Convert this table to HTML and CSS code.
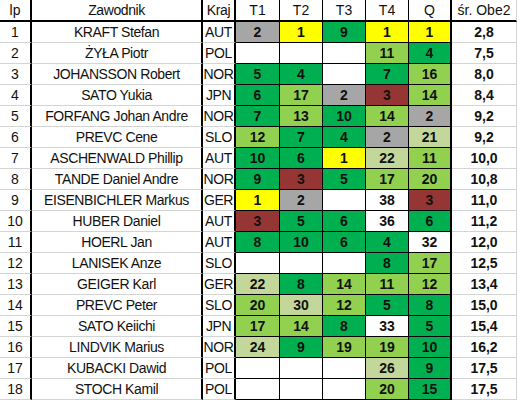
FILE: index.html
```html
<!doctype html>
<html lang="pl">
  <head>
    <meta charset="UTF-8" />
    <title>Wyniki - średnia</title>
    <link rel="stylesheet" href="styles.css">
  </head>
  <body>
    <div class="sheet">
      <div class="row head">
        <div class="c lp">lp</div>
        <div class="c name">Zawodnik</div>
        <div class="c kraj">Kraj</div>
        <div class="c t">T1</div>
        <div class="c t">T2</div>
        <div class="c t">T3</div>
        <div class="c t">T4</div>
        <div class="c t q">Q</div>
        <div class="c avg">śr. Obe2</div>
      </div>

      <div class="row">
        <div class="c lp">1</div><div class="c name">KRAFT Stefan</div><div class="c kraj">AUT</div>
        <div class="c t gray">2</div><div class="c t yellow">1</div><div class="c t dg">9</div><div class="c t yellow">1</div><div class="c t q yellow">1</div>
        <div class="c avg">2,8</div>
      </div>
      <div class="row">
        <div class="c lp">2</div><div class="c name">ŻYŁA Piotr</div><div class="c kraj">POL</div>
        <div class="c t"></div><div class="c t"></div><div class="c t"></div><div class="c t lg">11</div><div class="c t q dg">4</div>
        <div class="c avg">7,5</div>
      </div>
      <div class="row">
        <div class="c lp">3</div><div class="c name">JOHANSSON Robert</div><div class="c kraj">NOR</div>
        <div class="c t dg">5</div><div class="c t dg">4</div><div class="c t"></div><div class="c t dg">7</div><div class="c t q lg">16</div>
        <div class="c avg">8,0</div>
      </div>
      <div class="row">
        <div class="c lp">4</div><div class="c name">SATO Yukia</div><div class="c kraj">JPN</div>
        <div class="c t dg">6</div><div class="c t lg">17</div><div class="c t gray">2</div><div class="c t red">3</div><div class="c t q lg">14</div>
        <div class="c avg">8,4</div>
      </div>
      <div class="row">
        <div class="c lp">5</div><div class="c name">FORFANG Johan Andre</div><div class="c kraj">NOR</div>
        <div class="c t dg">7</div><div class="c t lg">13</div><div class="c t dg">10</div><div class="c t lg">14</div><div class="c t q gray">2</div>
        <div class="c avg">9,2</div>
      </div>
      <div class="row">
        <div class="c lp">6</div><div class="c name">PREVC Cene</div><div class="c kraj">SLO</div>
        <div class="c t lg">12</div><div class="c t dg">7</div><div class="c t dg">4</div><div class="c t gray">2</div><div class="c t q pale">21</div>
        <div class="c avg">9,2</div>
      </div>
      <div class="row">
        <div class="c lp">7</div><div class="c name">ASCHENWALD Phillip</div><div class="c kraj">AUT</div>
        <div class="c t dg">10</div><div class="c t dg">6</div><div class="c t yellow">1</div><div class="c t pale">22</div><div class="c t q lg">11</div>
        <div class="c avg">10,0</div>
      </div>
      <div class="row">
        <div class="c lp">8</div><div class="c name">TANDE Daniel Andre</div><div class="c kraj">NOR</div>
        <div class="c t dg">9</div><div class="c t red">3</div><div class="c t dg">5</div><div class="c t lg">17</div><div class="c t q lg">20</div>
        <div class="c avg">10,8</div>
      </div>
      <div class="row">
        <div class="c lp">9</div><div class="c name">EISENBICHLER Markus</div><div class="c kraj">GER</div>
        <div class="c t yellow">1</div><div class="c t gray">2</div><div class="c t"></div><div class="c t">38</div><div class="c t q red">3</div>
        <div class="c avg">11,0</div>
      </div>
      <div class="row">
        <div class="c lp">10</div><div class="c name">HUBER Daniel</div><div class="c kraj">AUT</div>
        <div class="c t red">3</div><div class="c t dg">5</div><div class="c t dg">6</div><div class="c t">36</div><div class="c t q dg">6</div>
        <div class="c avg">11,2</div>
      </div>
      <div class="row">
        <div class="c lp">11</div><div class="c name">HOERL Jan</div><div class="c kraj">AUT</div>
        <div class="c t dg">8</div><div class="c t dg">10</div><div class="c t dg">6</div><div class="c t dg">4</div><div class="c t q">32</div>
        <div class="c avg">12,0</div>
      </div>
      <div class="row">
        <div class="c lp">12</div><div class="c name">LANISEK Anze</div><div class="c kraj">SLO</div>
        <div class="c t"></div><div class="c t"></div><div class="c t"></div><div class="c t dg">8</div><div class="c t q lg">17</div>
        <div class="c avg">12,5</div>
      </div>
      <div class="row">
        <div class="c lp">13</div><div class="c name">GEIGER Karl</div><div class="c kraj">GER</div>
        <div class="c t pale">22</div><div class="c t dg">8</div><div class="c t lg">14</div><div class="c t lg">11</div><div class="c t q lg">12</div>
        <div class="c avg">13,4</div>
      </div>
      <div class="row">
        <div class="c lp">14</div><div class="c name">PREVC Peter</div><div class="c kraj">SLO</div>
        <div class="c t lg">20</div><div class="c t pale">30</div><div class="c t lg">12</div><div class="c t dg">5</div><div class="c t q dg">8</div>
        <div class="c avg">15,0</div>
      </div>
      <div class="row">
        <div class="c lp">15</div><div class="c name">SATO Keiichi</div><div class="c kraj">JPN</div>
        <div class="c t lg">17</div><div class="c t lg">14</div><div class="c t dg">8</div><div class="c t">33</div><div class="c t q dg">5</div>
        <div class="c avg">15,4</div>
      </div>
      <div class="row">
        <div class="c lp">16</div><div class="c name">LINDVIK Marius</div><div class="c kraj">NOR</div>
        <div class="c t pale">24</div><div class="c t dg">9</div><div class="c t lg">19</div><div class="c t lg">19</div><div class="c t q dg">10</div>
        <div class="c avg">16,2</div>
      </div>
      <div class="row">
        <div class="c lp">17</div><div class="c name">KUBACKI Dawid</div><div class="c kraj">POL</div>
        <div class="c t"></div><div class="c t"></div><div class="c t"></div><div class="c t pale">26</div><div class="c t q dg">9</div>
        <div class="c avg">17,5</div>
      </div>
      <div class="row">
        <div class="c lp">18</div><div class="c name">STOCH Kamil</div><div class="c kraj">POL</div>
        <div class="c t"></div><div class="c t"></div><div class="c t"></div><div class="c t lg">20</div><div class="c t q dg">15</div>
        <div class="c avg">17,5</div>
      </div>
    </div>
  </body>
</html>
```

FILE: styles.css
```css
/* Spreadsheet-like standings table */
body {
  margin: 0;
  background-color: #ffffff;
  font-family: "Liberation Sans", Arial, sans-serif;
  font-size: 14px;
  color: #111111;
}
.sheet {
  width: 517px;
}
.row {
  display: grid;
  grid-template-columns: 32px 171px 33px 44px 43px 43px 43px 43px 65px;
  height: 21px;
}
.row.head {
  height: 22px;
}
.c {
  display: flex;
  align-items: center;
  justify-content: center;
  overflow: hidden;
  white-space: nowrap;
  box-sizing: border-box;
  border-bottom: 1px solid #d4d4d4; /* light gridline */
}
.head .c {
  border-bottom: 2px solid #000000;
}
.lp,
.name,
.kraj {
  border-right: 2px solid #000000;
}
.name,
.kraj {
  letter-spacing: -0.4px;
}
.t {
  border-right: 1px solid #000000;
  border-bottom-color: #000000;
  font-weight: bold;
}
.t.q {
  border-right-width: 2px;
}
.avg {
  border-right: 1px solid #d4d4d4;
  font-weight: bold;
}
.head .t,
.head .avg {
  font-weight: normal;
}
/* cell fills */
.gray {
  background-color: #a6a6a6;
}
.yellow {
  background-color: #ffff00;
}
.dg {
  background-color: #00b050;
}
.lg {
  background-color: #92d050;
}
.pale {
  background-color: #c4d79b;
}
.red {
  background-color: #963634;
}
```
